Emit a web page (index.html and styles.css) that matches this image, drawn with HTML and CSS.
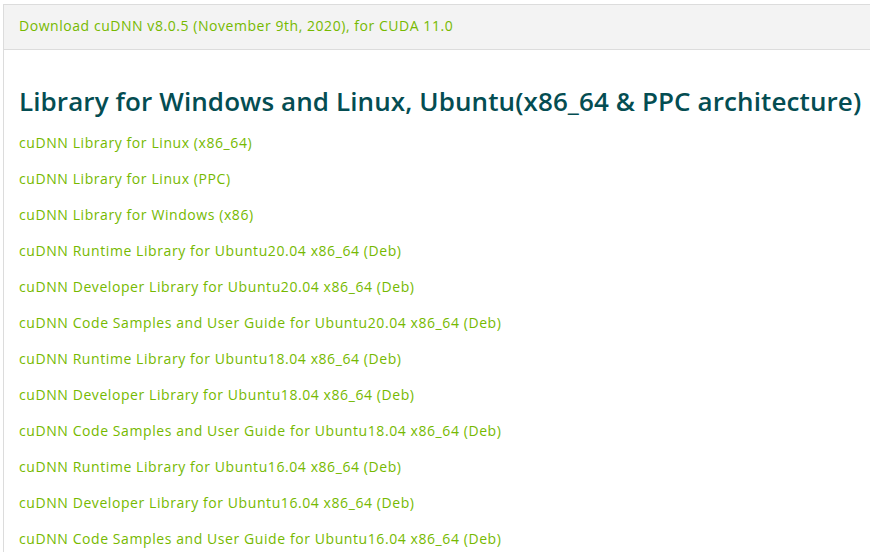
FILE: index.html
```html
<!DOCTYPE html>
<html>
<head>
<meta charset="utf-8">
<link rel="stylesheet" href="styles.css">
</head>
<body>
<div class="panel">
  <div class="panel-head"><a href="#">Download cuDNN v8.0.5 (November 9th, 2020), for CUDA 11.0</a></div>
  <div class="panel-body">
    <h3 class="section-title">Library for Windows and Linux, Ubuntu(x86_64 &amp; PPC architecture)</h3>
    <ul class="links">
      <li><a href="#">cuDNN Library for Linux (x86_64)</a></li>
      <li><a href="#">cuDNN Library for Linux (PPC)</a></li>
      <li><a href="#">cuDNN Library for Windows (x86)</a></li>
      <li><a href="#">cuDNN Runtime Library for Ubuntu20.04 x86_64 (Deb)</a></li>
      <li><a href="#">cuDNN Developer Library for Ubuntu20.04 x86_64 (Deb)</a></li>
      <li><a href="#">cuDNN Code Samples and User Guide for Ubuntu20.04 x86_64 (Deb)</a></li>
      <li><a href="#">cuDNN Runtime Library for Ubuntu18.04 x86_64 (Deb)</a></li>
      <li><a href="#">cuDNN Developer Library for Ubuntu18.04 x86_64 (Deb)</a></li>
      <li><a href="#">cuDNN Code Samples and User Guide for Ubuntu18.04 x86_64 (Deb)</a></li>
      <li><a href="#">cuDNN Runtime Library for Ubuntu16.04 x86_64 (Deb)</a></li>
      <li><a href="#">cuDNN Developer Library for Ubuntu16.04 x86_64 (Deb)</a></li>
      <li><a href="#">cuDNN Code Samples and User Guide for Ubuntu16.04 x86_64 (Deb)</a></li>
    </ul>
  </div>
</div>
</body>
</html>
```
FILE: styles.css
```css
html, body {
  margin: 0;
  padding: 0;
  background: #fff;
  overflow: hidden;
}
body {
  font-family: "Open Sans", "Liberation Sans", sans-serif;
  width: 870px;
  height: 552px;
}
a {
  color: #76b900;
  text-decoration: none;
}
.panel {
  margin: 4px 0 0 3px;
  width: 900px;
  border-top: 1px solid #dcdcdc;
  border-left: 1px solid #dcdcdc;
}
.panel-head {
  background: #f3f3f3;
  height: 40px;
  border-bottom: 1px solid #dcdcdc;
  padding: 0 0 4px 15px;
  display: flex;
  align-items: center;
  font-size: 14px;
  letter-spacing: 0.55px;
}
.panel-body {
  padding: 35px 0 0 15px;
}
.section-title {
  margin: 0 0 8px;
  font-size: 26px;
  font-weight: 600;
  color: #044d52;
  line-height: 32px;
  letter-spacing: 0.1px;
}
.links {
  list-style: none;
  margin: 0;
  padding: 0;
}
.links li {
  font-size: 14px;
  line-height: 36px;
  letter-spacing: 0.58px;
}
```
